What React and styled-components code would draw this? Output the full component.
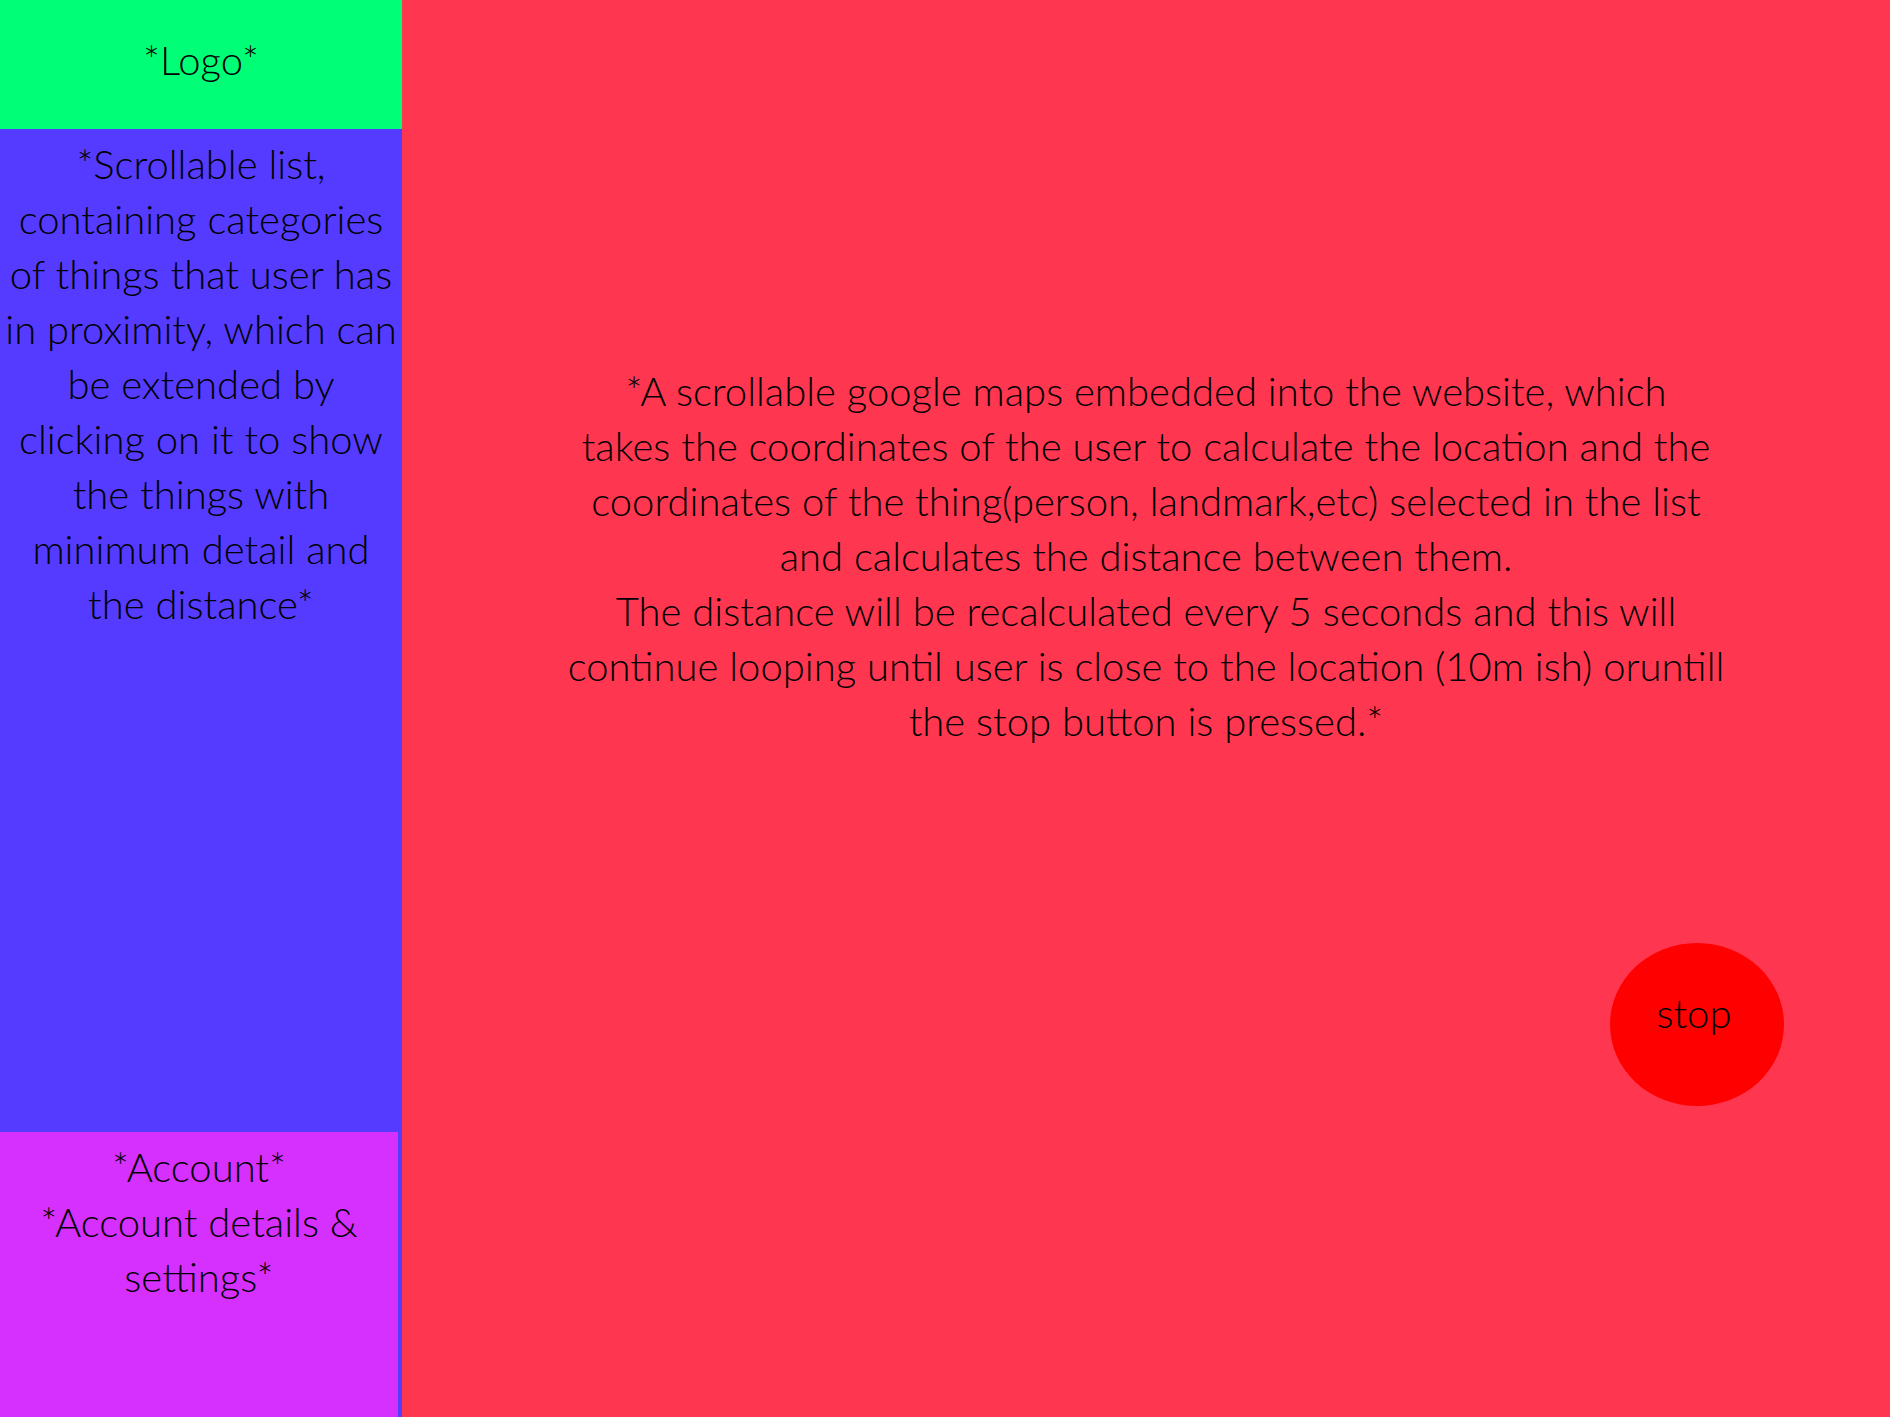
import React from "react";
import styled, { createGlobalStyle } from "styled-components";

const GlobalStyle = createGlobalStyle`
  html, body {
    margin: 0;
    padding: 0;
    height: 100%;
  }

  body {
    font-family: Lato, "Open Sans", sans-serif;
    font-weight: 300;
    color: #000;
  }
`;

const Page = styled.div`
  display: grid;
  grid-template-columns: 402px 1fr;
  height: 100vh;
  overflow: hidden;
`;

const Sidebar = styled.aside`
  display: grid;
  grid-template-rows: 129px 1fr 285px;
  background: #553bff;
  text-align: center;
  font-size: 40px;
  line-height: 55px;
`;

const Logo = styled.div`
  background: #00ff77;
  padding-top: 33px;
`;

const CategoryList = styled.div`
  overflow-y: auto;
  padding: 8px 0 0;
`;

const Account = styled.div`
  width: calc(100% - 4px);
  background: #d630ff;
  padding: 8px 10px 0;
  box-sizing: border-box;
`;

const MapArea = styled.main`
  position: relative;
  background: #ff3650;
  display: flex;
  justify-content: center;
  padding-top: 364px;
`;

const MapText = styled.p`
  margin: 0;
  width: 1175px;
  text-align: center;
  font-size: 40px;
  line-height: 55px;
`;

const StopButton = styled.button`
  position: absolute;
  right: 106px;
  bottom: 311px;
  width: 174px;
  height: 163px;
  border: none;
  border-radius: 50%;
  background: #ff0000;
  color: #000;
  font-family: inherit;
  font-weight: 300;
  font-size: 40px;
  padding: 0 6px 24px 0;
  cursor: pointer;
`;

const App = () => {
  return (
    <>
      <GlobalStyle />
      <Page>
        <Sidebar>
          <Logo>*Logo*</Logo>
          <CategoryList>
            *Scrollable list, containing categories of things that user has in
            proximity, which can be extended by clicking on it to show the
            things with minimum detail and the distance*
          </CategoryList>
          <Account>
            *Account*
            <br />
            *Account details &amp; settings*
          </Account>
        </Sidebar>

        <MapArea>
          <MapText>
            *A scrollable google maps embedded into the website, which
            <br />
            takes the coordinates of the user to calculate the location and the
            coordinates of the thing(person, landmark,etc) selected in the list
            and calculates the distance between them.
            <br />
            The distance will be recalculated every 5 seconds and this will
            continue looping until user is close to the location (10m ish)
            oruntill the stop button is pressed.*
          </MapText>
          <StopButton>stop</StopButton>
        </MapArea>
      </Page>
    </>
  );
};

export default App;
